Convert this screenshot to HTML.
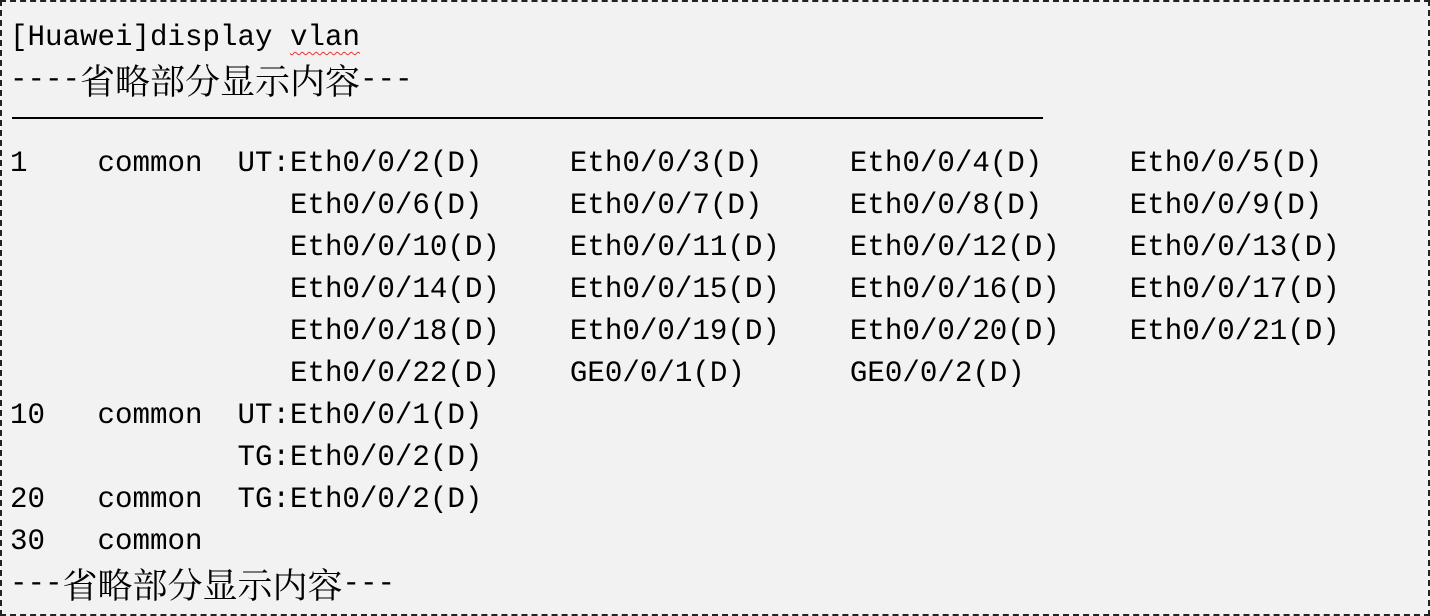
<!DOCTYPE html>
<html><head><meta charset="utf-8"><style>
html,body{margin:0;padding:0;}
body{width:1430px;height:616px;overflow:hidden;background:#fff;}
.box{position:absolute;left:0;top:0;width:1426px;height:612px;border:2px dashed #222;background:#f2f2f2;}
.t{position:absolute;left:10px;top:17px;font-family:"Liberation Mono",monospace;font-size:29.17px;color:#000;}
.t div{height:42px;line-height:42px;white-space:pre;overflow:visible;}
.c{font-family:"Noto Serif CJK SC","Noto Sans CJK SC",serif;font-size:35px;line-height:42px;vertical-align:top;}
.v{text-decoration:underline wavy #e33;text-decoration-thickness:1px;text-underline-offset:6px;}
.line{position:absolute;left:12px;top:117px;width:1031px;height:2px;background:#000;}
</style></head><body>
<div class="box"></div>
<div class="line"></div>
<div class="t">
<div>[Huawei]display <span class="v">vlan</span></div>
<div>----<span class="c">省略部分显示内容</span>---</div>
<div> </div>
<div>1    common  UT:Eth0/0/2(D)     Eth0/0/3(D)     Eth0/0/4(D)     Eth0/0/5(D)</div>
<div>                Eth0/0/6(D)     Eth0/0/7(D)     Eth0/0/8(D)     Eth0/0/9(D)</div>
<div>                Eth0/0/10(D)    Eth0/0/11(D)    Eth0/0/12(D)    Eth0/0/13(D)</div>
<div>                Eth0/0/14(D)    Eth0/0/15(D)    Eth0/0/16(D)    Eth0/0/17(D)</div>
<div>                Eth0/0/18(D)    Eth0/0/19(D)    Eth0/0/20(D)    Eth0/0/21(D)</div>
<div>                Eth0/0/22(D)    GE0/0/1(D)      GE0/0/2(D)</div>
<div>10   common  UT:Eth0/0/1(D)</div>
<div>             TG:Eth0/0/2(D)</div>
<div>20   common  TG:Eth0/0/2(D)</div>
<div>30   common</div>
<div>---<span class="c">省略部分显示内容</span>---</div>
</div>
</body></html>
